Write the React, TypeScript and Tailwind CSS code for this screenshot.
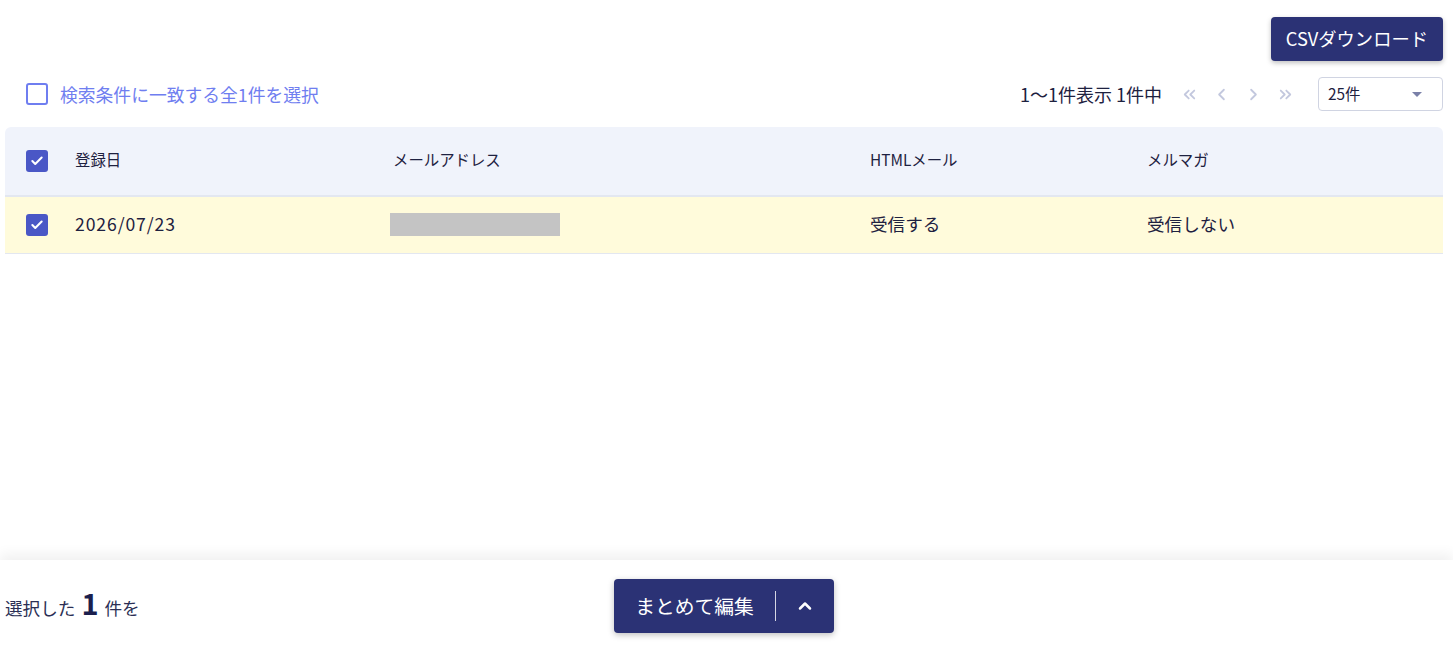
import { ChevronUp, ChevronLeft, ChevronRight, ChevronsLeft, ChevronsRight, Check } from 'lucide-react';

type Member = {
  id: number;
  registered: string;
  html: string;
  magazine: string;
};

const MEMBERS: Member[] = [{ id: 1, registered: '2026/07/23', html: '受信する', magazine: '受信しない' }];

const FONT = "font-['Noto_Sans_CJK_JP','Noto_Sans',sans-serif]";

function CheckBox({ checked }: { checked: boolean }) {
  if (!checked) {
    return <span className="block h-[22px] w-[22px] rounded-[3px] border-2 border-[#6f7ef0] bg-white" />;
  }
  return (
    <span className="flex h-[22px] w-[22px] items-center justify-center rounded-[3px] bg-[#4a57c6]">
      <Check size={14} strokeWidth={3.5} className="text-white" />
    </span>
  );
}

export default function App() {
  const selected = MEMBERS.length;

  return (
    <div className={`flex h-[647px] flex-col bg-white text-[#1e2140] ${FONT}`}>
      <main className="flex-1 pl-[5px] pr-[10px] pt-[17px]">
        <div className="flex justify-end">
          <button className="h-[44px] rounded-[4px] bg-[#2b3275] px-[15px] text-[18.3px] text-white shadow-[0_2px_5px_rgba(0,0,0,0.25)]">
            CSVダウンロード
          </button>
        </div>

        {/* select-all + pagination */}
        <div className="mt-[16px] flex h-[34px] items-center">
          <label className="flex items-center gap-[12px] pl-[21px] text-[17.8px] text-[#6f7ef0]">
            <CheckBox checked={false} />
            検索条件に一致する全1件を選択
          </label>
          <div className="ml-auto flex items-center">
            <span className="text-[18px]">1〜1件表示 1件中</span>
            <div className="ml-[18px] flex items-center gap-[13px] text-[#c3c8de]">
              <ChevronsLeft size={19} strokeWidth={2.25} />
              <ChevronLeft size={19} strokeWidth={2.25} />
              <ChevronRight size={19} strokeWidth={2.25} />
              <ChevronsRight size={19} strokeWidth={2.25} />
            </div>
            <div className="ml-[23px] flex h-[34px] w-[125px] items-center justify-between rounded-[4px] border border-[#d0d4e2] pl-[9px] pr-[20px] text-[15.4px]">
              <span>25件</span>
              <span className="h-0 w-0 border-x-[5px] border-t-[5px] border-x-transparent border-t-[#7a80a8]" />
            </div>
          </div>
        </div>

        <table className="mt-[16px] w-full border-collapse text-left">
          <thead>
            <tr className="h-[69px] border-b-2 border-[#e3e7f0] bg-[#f0f3fb] text-[15.4px]">
              <th className="w-[70px] rounded-tl-[6px] pl-[21px] font-normal">
                <CheckBox checked />
              </th>
              <th className="w-[318px] pb-[2px] font-normal">登録日</th>
              <th className="w-[477px] pb-[2px] font-normal">メールアドレス</th>
              <th className="w-[277px] pb-[2px] font-normal">HTMLメール</th>
              <th className="rounded-tr-[6px] pb-[2px] font-normal">メルマガ</th>
            </tr>
          </thead>
          <tbody>
            {MEMBERS.map((m) => (
              <tr key={m.id} className="h-[57px] border-b border-[#e3e7f0] bg-[#fffbdb] text-[17.6px]">
                <td className="pl-[21px]">
                  <CheckBox checked />
                </td>
                <td className="pb-[2px] tracking-[0.9px]">{m.registered}</td>
                <td>
                  <div className="ml-[-3px] h-[23px] w-[170px] bg-[#c4c4c4]" />
                </td>
                <td className="pb-[2px]">{m.html}</td>
                <td className="pb-[2px]">{m.magazine}</td>
              </tr>
            ))}
          </tbody>
        </table>
      </main>

      {/* bulk action bar */}
      <footer className="grid h-[87px] grid-cols-[1fr_auto_1fr] items-center bg-white pl-[5px] pt-[5px] shadow-[0_-6px_12px_rgba(0,0,0,0.06)]">
        <div className="mt-[-6px] flex items-baseline gap-[6px] text-[17.6px] text-[#2b2f55]">
          <span>選択した</span>
          <span className="text-[29px] font-bold text-[#1b1f4d]">{selected}</span>
          <span>件を</span>
        </div>
        <button className="ml-[-11px] flex h-[54px] w-[220px] items-center rounded-[4px] bg-[#2b3275] text-white shadow-[0_2px_6px_rgba(0,0,0,0.25)]">
          <span className="flex-1 pl-[1px] text-[19.8px]">まとめて編集</span>
          <span className="h-[30px] w-px bg-white/80" />
          <span className="flex w-[58px] justify-center">
            <ChevronUp size={20} strokeWidth={3} />
          </span>
        </button>
        <div />
      </footer>
    </div>
  );
}
